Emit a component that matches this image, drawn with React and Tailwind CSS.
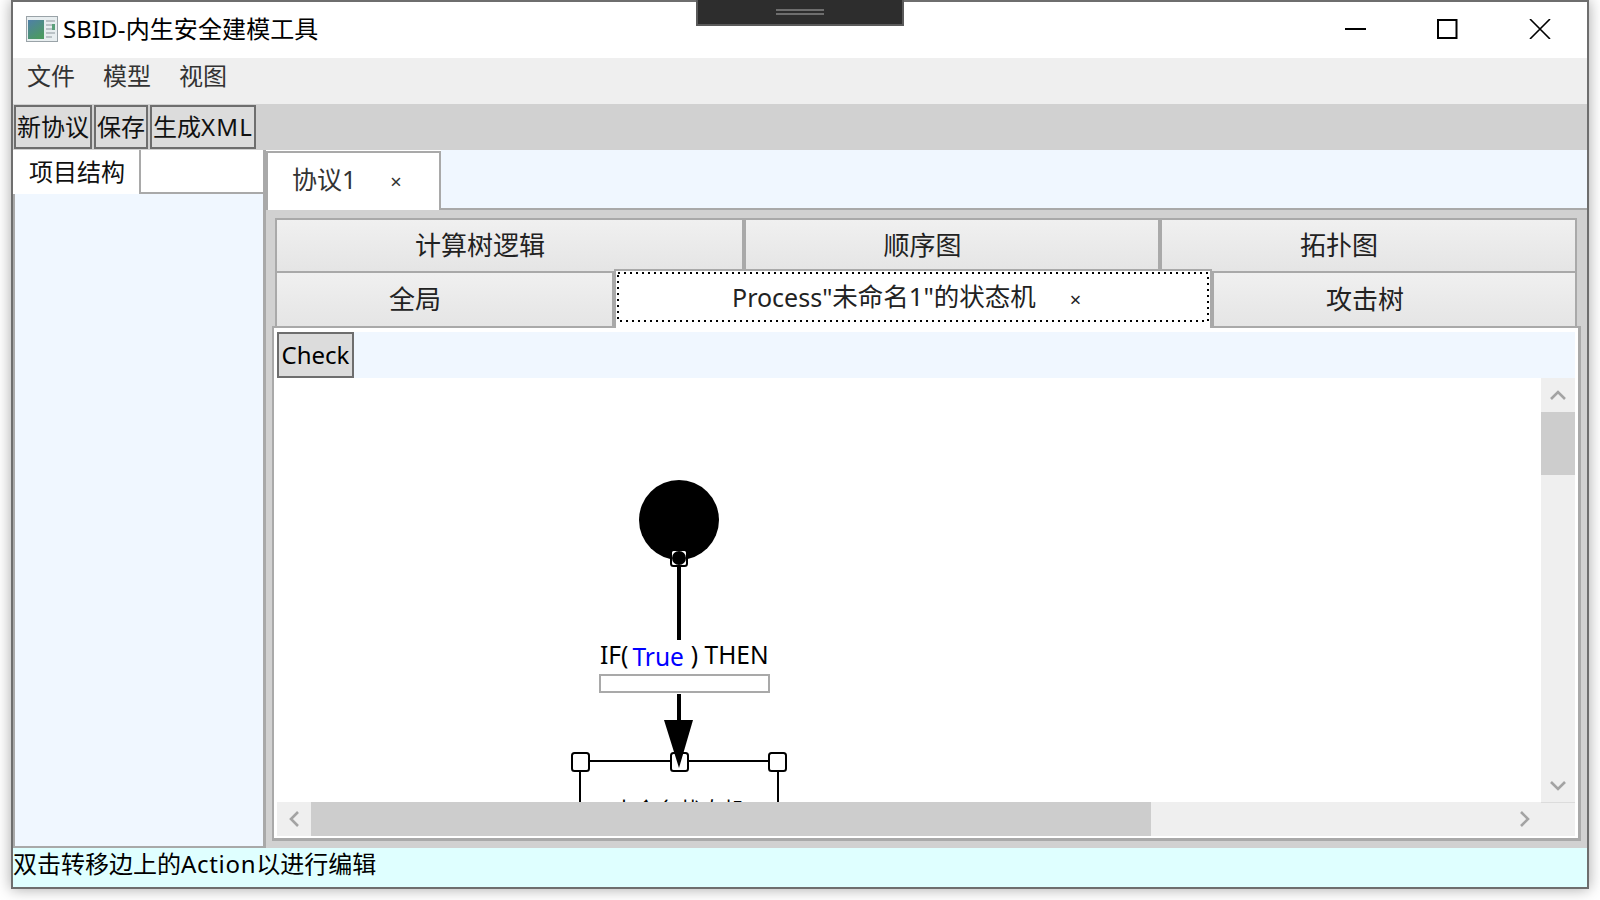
import React from 'react'

const topTabs = [
  { label: '计算树逻辑', width: 'w-[469px]' },
  { label: '顺序图', width: 'w-[416px]' },
  { label: '拓扑图', width: 'w-[417px]' },
]

const tabBase =
  'flex shrink-0 items-center justify-center border-[#a9a9a9] bg-gradient-to-b from-[#f0f0f0] to-[#e5e5e5] pr-[59px] text-[26px] text-[#222]'

function Chevron({ dir }) {
  const points = {
    up: '1,9 8,2 15,9',
    down: '1,2 8,9 15,2',
    left: '9,1 2,8 9,15',
    right: '2,1 9,8 2,15',
  }[dir]
  const vertical = dir === 'up' || dir === 'down'
  return (
    <svg
      width={vertical ? 16 : 11}
      height={vertical ? 11 : 16}
      viewBox={vertical ? '0 0 16 11' : '0 0 11 16'}
      fill="none"
      stroke="#a3a3a3"
      strokeWidth="2.6"
    >
      <polyline points={points} />
    </svg>
  )
}

function ToolButton({ width, children }) {
  return (
    <button className={`flex h-[44px] shrink-0 items-center justify-center border-2 border-[#6e6e6e] bg-[#dcdcdc] text-[24px] leading-none text-[#111] ${width}`}>
      {children}
    </button>
  )
}

function AppIcon() {
  return (
    <svg width="32" height="26" viewBox="0 0 32 26" className="shrink-0">
      <defs>
        <linearGradient id="pane" x1="0" y1="0" x2="0.6" y2="1">
          <stop offset="0" stopColor="#4f7fa8" />
          <stop offset="1" stopColor="#4c9a62" />
        </linearGradient>
      </defs>
      <rect x="0.5" y="0.5" width="31" height="25" fill="#e8eef0" stroke="#9aa3a8" />
      <rect x="2" y="4" width="16" height="19" fill="url(#pane)" />
      <path d="M20 5h9M20 9h9M20 13h9M20 17h9M20 21h6" stroke="#aab4b8" strokeWidth="1.5" />
      <rect x="26" y="8" width="3" height="6" fill="#5ba07a" />
    </svg>
  )
}

function Diagram() {
  return (
    <div className="relative min-w-0 flex-1 overflow-hidden bg-white">
      <svg width="1264" height="424" className="absolute left-0 top-0">
        <circle cx="402" cy="142" r="40" fill="#000" />
        <rect x="394" y="172" width="16" height="16" rx="2.5" fill="#fff" stroke="#000" strokeWidth="2" />
        <circle cx="402" cy="180" r="7" fill="#000" />
        <line x1="402" y1="188" x2="402" y2="262" stroke="#000" strokeWidth="4" />
        <line x1="402" y1="316" x2="402" y2="345" stroke="#000" strokeWidth="4" />
        <line x1="303" y1="383" x2="501" y2="383" stroke="#000" strokeWidth="2" />
        <line x1="303" y1="393" x2="303" y2="424" stroke="#000" strokeWidth="2" />
        <line x1="501" y1="393" x2="501" y2="424" stroke="#000" strokeWidth="2" />
        <rect x="295" y="375" width="17" height="18" rx="2.5" fill="#fff" stroke="#000" strokeWidth="2" />
        <rect x="394" y="375" width="17" height="18" rx="2.5" fill="#fff" stroke="#000" strokeWidth="2" />
        <rect x="492" y="375" width="17" height="18" rx="2.5" fill="#fff" stroke="#000" strokeWidth="2" />
        <polygon points="387,342 416,342 402,390" fill="#000" />
      </svg>
      <div className="absolute left-[323px] top-[261px] flex h-[32px] items-center whitespace-nowrap text-[24.5px] leading-none text-black">
        <span>IF(</span>
        <span className="ml-[4px] mt-[4px] text-[#0000ff]">True</span>
        <span className="ml-[7px]">) THEN</span>
      </div>
      <div className="absolute left-[322px] top-[296px] h-[19px] w-[171px] border-2 border-[#a9a9a9] bg-white" />
      <div className="absolute left-[303px] top-[420px] w-[198px] text-center text-[22px] leading-none text-black">
        未命名状态机
      </div>
    </div>
  )
}

export default function App() {
  return (
    <div className="relative h-[900px] w-[1600px] overflow-hidden bg-white [font-family:'Noto_Sans','Noto_Sans_CJK_SC',sans-serif]">
      <div className="ml-[11px] flex h-[889px] w-[1578px] flex-col border-2 border-[#6e6e6e] bg-white shadow-[0_0_14px_rgba(0,0,0,0.35)]">
        {/* Title bar */}
        <div className="flex h-[56px] shrink-0 items-center bg-white pb-[2px] pl-[13px]">
          <AppIcon />
          <span className="ml-[5px] text-[24px] leading-none tracking-[0.1px] text-black">SBID-内生安全建模工具</span>
          <div className="ml-auto flex items-center pr-[36px]">
            <svg width="22" height="20" viewBox="0 0 22 20">
              <line x1="0" y1="10" x2="21" y2="10" stroke="#000" strokeWidth="2" />
            </svg>
            <svg width="21" height="20" viewBox="0 0 21 20" className="ml-[70px]">
              <rect x="1" y="1" width="18.5" height="18" fill="none" stroke="#000" strokeWidth="2" />
            </svg>
            <svg width="22" height="20" viewBox="0 0 22 20" className="ml-[71px]">
              <path d="M1 0L21 20M21 0L1 20" stroke="#000" strokeWidth="1.6" />
            </svg>
          </div>
        </div>

        {/* Menu */}
        <div className="flex h-[46px] shrink-0 items-center gap-[28px] bg-[#efefef] pb-[10px] pl-[14px] text-[24px] leading-none text-[#333]">
          <span>文件</span>
          <span>模型</span>
          <span>视图</span>
        </div>

        {/* Toolbar */}
        <div className="flex h-[46px] shrink-0 items-start gap-[2px] bg-[#d1d1d1] pl-[1px] pt-[1px]">
          <ToolButton width="w-[78px]">新协议</ToolButton>
          <ToolButton width="w-[54px]">保存</ToolButton>
          <ToolButton width="w-[106px]">
            生成<span className="tracking-[1.2px]">XML</span>
          </ToolButton>
        </div>

        {/* Body */}
        <div className="flex h-[698px] shrink-0">
          <div className="flex w-[252px] shrink-0 flex-col border-r-2 border-[#a9a9a9]">
            <div className="flex h-[44px] shrink-0">
              <div className="flex w-[128px] shrink-0 items-center border-r-2 border-[#a9a9a9] pl-[16px] text-[24px] leading-none text-[#111]">
                项目结构
              </div>
              <div className="flex-1 border-b-2 border-[#a9a9a9]" />
            </div>
            <div className="flex-1 border-b-2 border-l-2 border-[#a9a9a9] bg-[#f0f7ff]" />
          </div>

          <div className="flex min-w-0 flex-1 flex-col border-l border-[#a9a9a9]">
            <div className="flex h-[60px] shrink-0">
              <div className="mt-[1px] flex w-[175px] shrink-0 items-center border-x-2 border-t-2 border-[#a9a9a9] bg-white pb-[4px] pl-[24px] text-[25px] leading-none text-[#333]">
                <span>协议1</span>
                <span className="ml-[34px] mt-[4px] text-[20px] leading-none">×</span>
              </div>
              <div className="flex-1 border-b-2 border-[#a9a9a9] bg-[#f0f7ff]" />
            </div>

            <div className="flex-1 bg-[#d1d1d1] pt-[8px]">
              <div className="ml-[9px] flex w-[1302px]">
                {topTabs.map((tab) => (
                  <div key={tab.label} className={`${tabBase} ${tab.width} h-[55px] border-2`}>
                    {tab.label}
                  </div>
                ))}
              </div>
              <div className="ml-[9px] flex h-[53px] w-[1302px] items-start">
                <div className={`${tabBase} h-[53px] w-[339px] border-x-2`}>全局</div>
                <div className="relative z-10 -mt-[4px] h-[59px] w-[598px] shrink-0 border-x-2 border-t-2 border-[#a9a9a9] bg-white px-[1px] pt-[1px]">
                  <div className="relative flex h-[50px] items-center pl-[115px] text-[25.5px] leading-none text-[#222]">
                    <svg width="592" height="50" className="absolute left-0 top-0">
                      <rect x="1" y="1" width="590" height="48" fill="none" stroke="#000" strokeWidth="2" strokeDasharray="2 4" />
                    </svg>
                    <span className="text-[25px]">Process"</span>
                    <span>未命名1"的状态机</span>
                    <span className="ml-[34px] mt-[5px] text-[20px] leading-none">×</span>
                  </div>
                </div>
                <div className={`${tabBase} h-[53px] w-[365px] border-x-2`}>攻击树</div>
              </div>

              <div className="ml-[6px] flex h-[515px] w-[1309px] flex-col border-b-[3px] border-l-2 border-r-[3px] border-t-2 border-[#a9a9a9] bg-white pb-[2px] pl-[3px] pr-[3px] pt-[4px]">
                <div className="flex h-[46px] shrink-0 bg-[#f0f7ff]">
                  <button className="flex h-[46px] w-[77px] items-center justify-center border-2 border-[#6e6e6e] bg-[#dcdcdc] text-[24px] leading-none text-black">
                    Check
                  </button>
                </div>

                <div className="flex min-h-0 flex-1">
                  <Diagram />
                  <div className="flex w-[34px] shrink-0 flex-col bg-[#efefef]">
                    <div className="flex h-[34px] items-center justify-center">
                      <Chevron dir="up" />
                    </div>
                    <div className="h-[63px] bg-[#cdcdcd]" />
                    <div className="flex-1" />
                    <div className="flex h-[34px] items-center justify-center">
                      <Chevron dir="down" />
                    </div>
                  </div>
                </div>

                <div className="flex h-[34px] shrink-0 bg-[#efefef]">
                  <div className="flex w-[34px] items-center justify-center">
                    <Chevron dir="left" />
                  </div>
                  <div className="w-[840px] bg-[#cdcdcd]" />
                  <div className="flex-1" />
                  <div className="flex w-[34px] items-center justify-center">
                    <Chevron dir="right" />
                  </div>
                  <div className="w-[34px] border-t border-[#dcdcdc]" />
                </div>
              </div>
            </div>
          </div>
        </div>

        {/* Status bar */}
        <div className="flex h-[39px] shrink-0 items-center bg-[#dfffff] pb-[8px] text-[24px] leading-none text-black">
          双击转移边上的<span className="tracking-[0.7px]">Action</span>以进行编辑
        </div>
      </div>

      {/* Fullscreen handle */}
      <div className="absolute left-[696px] top-0 flex h-[26px] w-[208px] items-center justify-center border-2 border-t-0 border-[#5a5a5a] bg-[#2d2d2d]">
        <div className="h-[6px] w-[48px] border-y-2 border-[#6e6e6e]" />
      </div>
    </div>
  )
}
